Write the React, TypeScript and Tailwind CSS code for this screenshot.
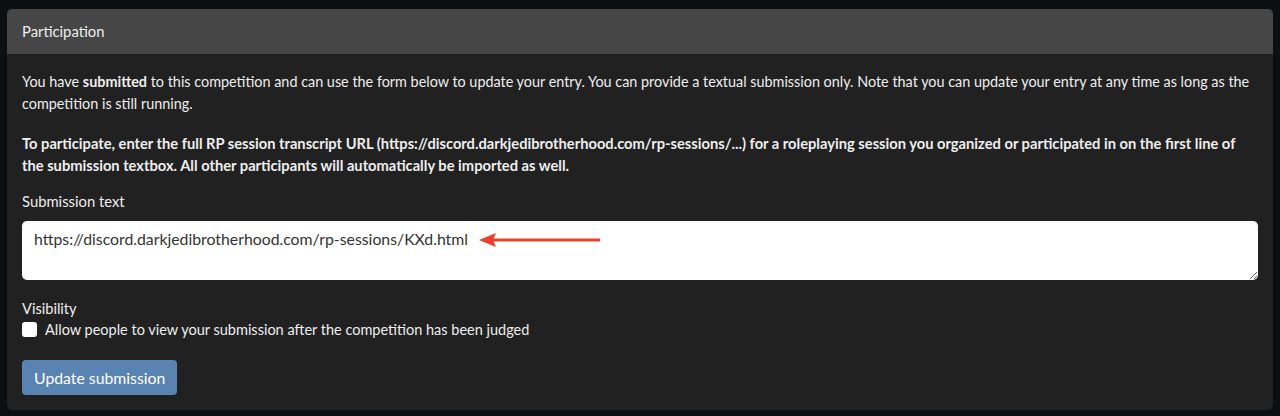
import React from "react";

export default function App() {
  return (
    <div
      className="w-[1280px] h-[416px] bg-[#0e0f10] px-[7px] pt-[9px] overflow-hidden"
      style={{ fontFamily: "Lato, 'Open Sans', sans-serif" }}
    >
      <div className="rounded-[5px] overflow-hidden bg-[#212121] text-[#eeeeee] text-[14.4px] leading-[21px]">
        <div className="h-[45px] bg-[#464646] px-[15px] flex items-center text-[14.8px]">
          Participation
        </div>
        <div className="px-[15px] pt-[17px] pb-[15px]">
          <p className="mb-[17px] leading-[22px]">
            You have <span className="font-bold">submitted</span> to this competition and can use the form below to update your entry. You can provide a textual submission only. Note that you can update your entry at any time as long as the competition is still running.
          </p>
          <p className="mb-[15px] font-bold leading-[22px] text-[14.7px]">
            To participate, enter the full RP session transcript URL (https://discord.darkjedibrotherhood.com/rp-sessions/...) for a roleplaying session you organized or participated in on the first line of the submission textbox. All other participants will automatically be imported as well.
          </p>
          <div className="mb-[9px] text-[14.8px]">Submission text</div>
          <div className="relative">
            <textarea
              className="block w-full h-[59px] rounded-[5px] bg-white text-[#333] px-[12px] py-[7px] text-[15.8px] leading-[21px] resize-y outline-none"
              style={{ fontFamily: "Lato, 'Open Sans', sans-serif" }}
              defaultValue="https://discord.darkjedibrotherhood.com/rp-sessions/KXd.html"
            />
            <svg
              className="absolute left-[457px] top-[10px]"
              width="123"
              height="18"
              viewBox="0 0 123 18"
            >
              <line x1="12" y1="9" x2="121" y2="9" stroke="#e8402a" strokeWidth="3" />
              <polygon points="0,9 17,2 14,9 17,16" fill="#e8402a" />
            </svg>
          </div>
          <div className="mt-[18px] text-[14.6px]">Visibility</div>
          <label className="flex items-center gap-[8px] text-[14.5px]">
            <span className="w-[15px] h-[15px] rounded-[3px] bg-white inline-block" />
            <span>Allow people to view your submission after the competition has been judged</span>
          </label>
          <button className="mt-[20px] h-[35px] px-[12px] rounded-[4px] bg-[#5983b0] text-white text-[15.8px]">
            Update submission
          </button>
        </div>
      </div>
    </div>
  );
}
